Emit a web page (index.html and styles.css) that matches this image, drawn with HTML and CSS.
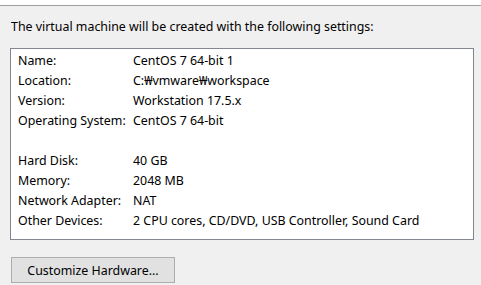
FILE: index.html
```html
<!DOCTYPE html>
<html>
<head>
<meta charset="utf-8">
<link rel="stylesheet" href="styles.css">
</head>
<body>
<div class="topbar"></div>
<div class="panel">
  <p class="intro">The virtual machine will be created with the following settings:</p>
  <div class="summary">
    <div class="row"><span class="label">Name:</span><span class="value">CentOS 7 64-bit 1</span></div>
    <div class="row"><span class="label">Location:</span><span class="value">C:₩vmware₩workspace</span></div>
    <div class="row"><span class="label">Version:</span><span class="value">Workstation 17.5.x</span></div>
    <div class="row"><span class="label">Operating System:</span><span class="value">CentOS 7 64-bit</span></div>
    <div class="row"></div>
    <div class="row"><span class="label">Hard Disk:</span><span class="value">40 GB</span></div>
    <div class="row"><span class="label">Memory:</span><span class="value">2048 MB</span></div>
    <div class="row"><span class="label">Network Adapter:</span><span class="value">NAT</span></div>
    <div class="row"><span class="label">Other Devices:</span><span class="value">2 CPU cores, CD/DVD, USB Controller, Sound Card</span></div>
  </div>
  <button class="btn">Customize Hardware...</button>
</div>
</body>
</html>
```

FILE: styles.css
```css
html, body {
  margin: 0;
  padding: 0;
  width: 481px;
  height: 285px;
  overflow: hidden;
  background: #f0f0f0;
  font-family: "Noto Sans", sans-serif;
  font-size: 12.4px;
  color: #000;
}
.topbar {
  height: 5px;
  background: #fff;
  border-bottom: 1px solid #a0a0a0;
}
.panel {
  padding: 0 8px 0 10px;
}
.intro {
  margin: 0;
  padding: 11px 0 0 1px;
  height: 31px;
  box-sizing: border-box;
  line-height: 20px;
}
.summary {
  margin-top: 11px;
  width: 464px;
  height: 192px;
  box-sizing: border-box;
  border: 1px solid #828790;
  background: #fff;
  padding: 2px 0 0 7px;
}
.row {
  height: 20px;
  line-height: 20px;
  display: flex;
  white-space: nowrap;
}
.label {
  width: 115px;
}
.btn {
  margin-top: 17px;
  margin-left: 1px;
  width: 164px;
  height: 26px;
  background: #e1e1e1;
  border: 1px solid #adadad;
  font-family: inherit;
  font-size: 12.4px;
  color: #000;
  padding: 0;
  text-align: center;
}
```
